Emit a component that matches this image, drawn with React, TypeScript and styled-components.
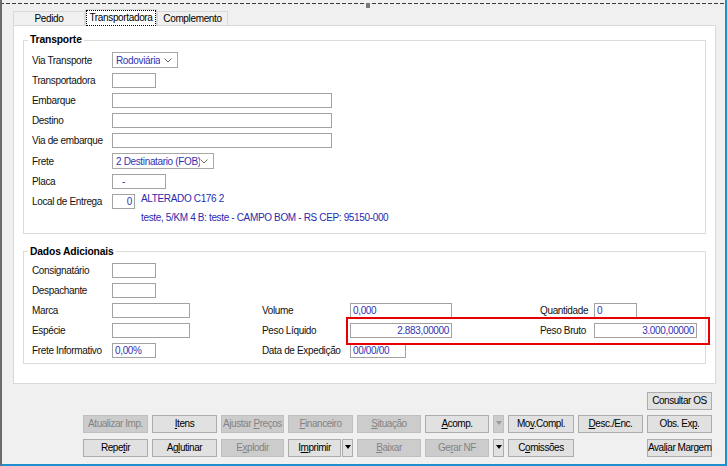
import styled, { createGlobalStyle } from "styled-components";

const GlobalStyle = createGlobalStyle`
  html, body {
    margin: 0;
    padding: 0;
    background: #f0f0f0;
  }
  body {
    font-family: "Liberation Sans", Arial, sans-serif;
    font-size: 10px;
    letter-spacing: -0.35px;
    color: #111;
  }
  * {
    box-sizing: border-box;
  }
`;

const Window = styled.div`
  position: relative;
  width: 727px;
  height: 466px;
  border-left: 2px solid #6b6b6b;
  border-right: 2px solid #1e8fcf;
  border-bottom: 2px solid #1e8fcf;
  background: #f0f0f0;
  overflow: hidden;
`;

const Splitter = styled.div`
  position: relative;
  height: 4px;
  margin-left: -2px;
  background: repeating-linear-gradient(to right, #3a3a3a 0 4px, transparent 4px 6px) bottom / 100% 1px no-repeat;
`;

const Handle = styled.span`
  position: absolute;
  left: 366px;
  top: 3px;
  width: 4px;
  height: 5px;
  background: #7a7a7a;
`;

const Content = styled.div`
  padding: 5px 9px 0 11px;
`;

const TabStrip = styled.div`
  position: relative;
  z-index: 1;
  display: flex;
  align-items: flex-end;
  height: 17px;
  margin-bottom: -1px;
`;

const Tab = styled.div<{ $active?: boolean; $w: number }>`
  display: flex;
  align-items: center;
  justify-content: center;
  width: ${(p) => p.$w}px;
  height: ${(p) => (p.$active ? 17 : 14)}px;
  margin-bottom: ${(p) => (p.$active ? 0 : 1)}px;
  border: 1px solid #d9d9d9;
  border-bottom: none;
  background: ${(p) => (p.$active ? "#ffffff" : "#f0f0f0")};
  color: #000;
  white-space: nowrap;
`;

const FocusText = styled.span`
  outline: 1px dotted #000;
  padding: 1px 2px;
  line-height: 12px;
`;

const Panel = styled.div`
  position: relative;
  background: #fff;
  border: 1px solid #d9d9d9;
  padding: 7px 9px 19px;
`;

const Group = styled.fieldset<{ $pt: number; $pb: number; $mt?: number }>`
  margin: ${(p) => p.$mt ?? 0}px 0 0;
  padding: ${(p) => p.$pt}px 8px ${(p) => p.$pb}px;
  border: 1px solid #dcdcdc;
  min-width: 0;
`;

const Legend = styled.legend`
  font-weight: bold;
  font-size: 10.3px;
  letter-spacing: -0.15px;
  line-height: 14px;
  padding: 0 2px;
  margin-left: -4px;
  color: #000;
`;

const Row = styled.div`
  display: flex;
  align-items: center;
  height: 20.2px;
`;

const Label = styled.span`
  flex: none;
  width: 80px;
  white-space: nowrap;
  color: #111;
`;

const Field = styled.div<{ $w: number; $right?: boolean; $pl?: number }>`
  flex: none;
  width: ${(p) => p.$w}px;
  height: 15px;
  border: 1px solid #a2a2a2;
  background: #fff;
  color: #3232b4;
  line-height: 13px;
  padding: 0 2px 0 ${(p) => p.$pl ?? 2}px;
  text-align: ${(p) => (p.$right ? "right" : "left")};
  white-space: nowrap;
  overflow: hidden;
`;

const Combo = styled.div<{ $w: number }>`
  flex: none;
  display: flex;
  align-items: center;
  justify-content: space-between;
  width: ${(p) => p.$w}px;
  height: 16px;
  border: 1px solid #a8a8a8;
  background: #fff;
  color: #3232b4;
  padding: 0 5px 0 3px;
  white-space: nowrap;
`;

const ComboText = styled.span<{ $w?: number }>`
  width: ${(p) => (p.$w ? `${p.$w}px` : "auto")};
  overflow: hidden;
`;

const Address = styled.div`
  align-self: flex-start;
  margin-left: 6px;
  line-height: 16px;
  color: #2a2ab0;
  white-space: nowrap;
`;

const AddressLine = styled.div`
  height: 12px;
  line-height: 12px;
  padding-left: 109px;
  color: #2a2ab0;
  white-space: nowrap;
`;

const DataRow = styled.div`
  display: grid;
  grid-template-columns: 80px 150px 88px 190px 54px auto;
  align-items: center;
  height: 20px;
`;

const Highlight = styled.div`
  position: absolute;
  left: 332px;
  top: 291px;
  width: 364px;
  height: 28px;
  border: 2px solid #e60000;
  pointer-events: none;
`;

const ButtonGrid = styled.div`
  display: grid;
  grid-template-columns: 65px 65px 63px 65px 64px 64px 11px 66px 65px 65px;
  grid-template-rows: repeat(3, 18px);
  column-gap: 4px;
  row-gap: 5.5px;
  margin: 8px 0 0 70px;
`;

const Btn = styled.button<{ $off?: boolean; $col?: number; $row?: number }>`
  grid-column: ${(p) => p.$col ?? "auto"};
  grid-row: ${(p) => p.$row ?? "auto"};
  display: block;
  height: 18px;
  margin: 0;
  padding: 0;
  font-family: inherit;
  font-size: 10px;
  line-height: 16px;
  letter-spacing: -0.45px;
  text-align: center;
  white-space: nowrap;
  border: 1px solid ${(p) => (p.$off ? "#bfbfbf" : "#adadad")};
  background: ${(p) => (p.$off ? "#cccccc" : "#e1e1e1")};
  color: ${(p) => (p.$off ? "#838383" : "#000")};

  u {
    text-underline-offset: 1px;
  }
`;

const Split = styled.div<{ $col: number; $row: number }>`
  grid-column: ${(p) => p.$col};
  grid-row: ${(p) => p.$row};
  display: grid;
  grid-template-columns: 53px 11px;
  column-gap: 1px;
`;

const Caret = styled.span<{ $off?: boolean }>`
  display: inline-block;
  vertical-align: middle;
  margin-top: -2px;
  width: 0;
  height: 0;
  border-left: 3.5px solid transparent;
  border-right: 3.5px solid transparent;
  border-top: 4px solid ${(p) => (p.$off ? "#9a9a9a" : "#000")};
`;

const Chevron = () => (
  <svg width="8" height="5" viewBox="0 0 8 5">
    <polyline points="0.5,0.5 4,4 7.5,0.5" fill="none" stroke="#666" strokeWidth="1" />
  </svg>
);

export default function App() {
  return (
    <>
      <GlobalStyle />
      <Window>
        <Splitter>
          <Handle />
        </Splitter>
        <Content>
          <TabStrip>
            <Tab $w={72}>Pedido</Tab>
            <Tab $w={72} $active>
              <FocusText>Transportadora</FocusText>
            </Tab>
            <Tab $w={71}>Complemento</Tab>
          </TabStrip>
          <Panel>
            <Group $pt={3} $pb={9}>
              <Legend>Transporte</Legend>
              <Row>
                <Label>Via Transporte</Label>
                <Combo $w={66}>
                  <ComboText>Rodoviária</ComboText>
                  <Chevron />
                </Combo>
              </Row>
              <Row>
                <Label>Transportadora</Label>
                <Field $w={44} />
              </Row>
              <Row>
                <Label>Embarque</Label>
                <Field $w={220} />
              </Row>
              <Row>
                <Label>Destino</Label>
                <Field $w={220} />
              </Row>
              <Row>
                <Label>Via de embarque</Label>
                <Field $w={220} />
              </Row>
              <Row>
                <Label>Frete</Label>
                <Combo $w={102}>
                  <ComboText $w={85}>2 Destinatario (FOB)</ComboText>
                  <Chevron />
                </Combo>
              </Row>
              <Row>
                <Label>Placa</Label>
                <Field $w={54} $pl={9}>-</Field>
              </Row>
              <Row>
                <Label>Local de Entrega</Label>
                <Field $w={23} $right>0</Field>
                <Address>ALTERADO C176 2</Address>
              </Row>
              <AddressLine>teste, 5/KM 4 B: teste - CAMPO BOM - RS CEP: 95150-000</AddressLine>
            </Group>

            <Group $pt={2} $pb={2} $mt={11}>
              <Legend>Dados Adicionais</Legend>
              <DataRow>
                <Label>Consignatário</Label>
                <Field $w={44} />
              </DataRow>
              <DataRow>
                <Label>Despachante</Label>
                <Field $w={44} />
              </DataRow>
              <DataRow>
                <Label>Marca</Label>
                <Field $w={78} />
                <Label>Volume</Label>
                <Field $w={102}>0,000</Field>
                <Label>Quantidade</Label>
                <Field $w={43}>0</Field>
              </DataRow>
              <DataRow>
                <Label>Espécie</Label>
                <Field $w={78} />
                <Label>Peso Líquido</Label>
                <Field $w={102} $right>2.883,00000</Field>
                <Label>Peso Bruto</Label>
                <Field $w={103} $right>3.000,00000</Field>
              </DataRow>
              <DataRow>
                <Label>Frete Informativo</Label>
                <Field $w={44}>0,00%</Field>
                <Label>Data de Expedição</Label>
                <Field $w={56}>00/00/00</Field>
              </DataRow>
            </Group>
            <Highlight />
          </Panel>

          <ButtonGrid>
            <Btn $col={10} $row={1}>Consultar OS</Btn>

            <Btn $col={1} $row={2} $off>Atualizar Imp.</Btn>
            <Btn $col={2} $row={2}><u>I</u>tens</Btn>
            <Btn $col={3} $row={2} $off>Ajustar <u>P</u>reços</Btn>
            <Btn $col={4} $row={2} $off><u>F</u>inanceiro</Btn>
            <Btn $col={5} $row={2} $off><u>S</u>ituação</Btn>
            <Btn $col={6} $row={2}><u>A</u>comp.</Btn>
            <Btn $col={7} $row={2} $off><Caret $off /></Btn>
            <Btn $col={8} $row={2}>Mo<u>v</u>.Compl.</Btn>
            <Btn $col={9} $row={2}><u>D</u>esc./Enc.</Btn>
            <Btn $col={10} $row={2}>Obs. Ex<u>p</u>.</Btn>

            <Btn $col={1} $row={3}>Repe<u>t</u>ir</Btn>
            <Btn $col={2} $row={3}>Ag<u>l</u>utinar</Btn>
            <Btn $col={3} $row={3} $off>E<u>x</u>plodir</Btn>
            <Split $col={4} $row={3}>
              <Btn>I<u>m</u>primir</Btn>
              <Btn><Caret /></Btn>
            </Split>
            <Btn $col={5} $row={3} $off><u>B</u>aixar</Btn>
            <Btn $col={6} $row={3} $off>Ge<u>r</u>ar NF</Btn>
            <Btn $col={7} $row={3}><Caret /></Btn>
            <Btn $col={8} $row={3}>C<u>o</u>missões</Btn>
            <Btn $col={10} $row={3}>Aval<u>i</u>ar Margem</Btn>
          </ButtonGrid>
        </Content>
      </Window>
    </>
  );
}
